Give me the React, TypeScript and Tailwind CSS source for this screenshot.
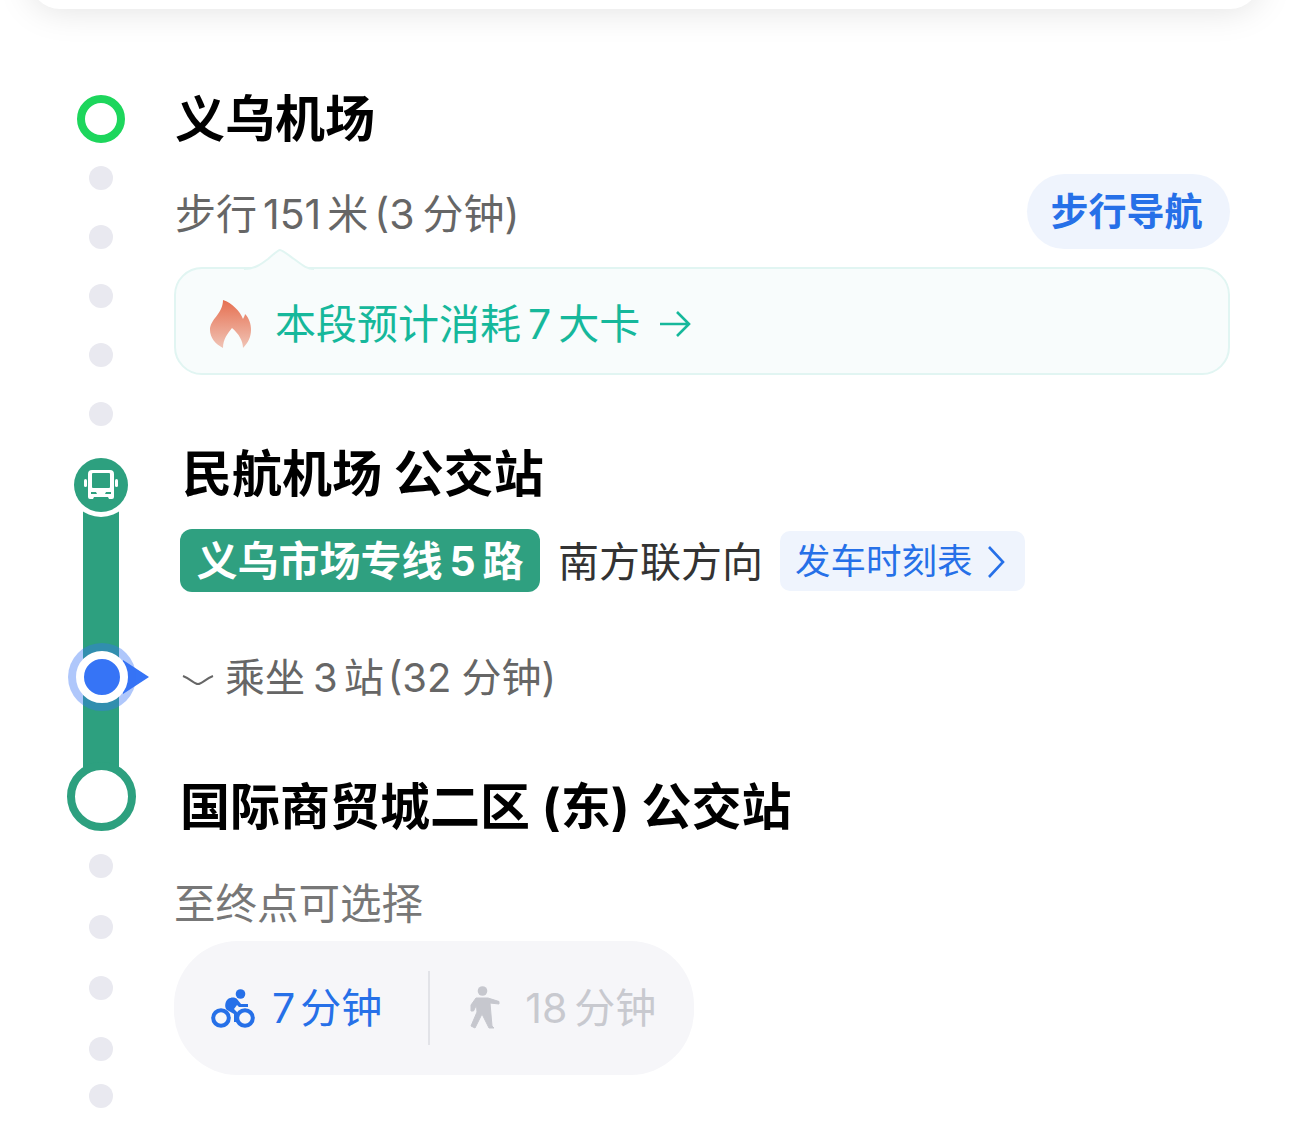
import React from "react";

const Dot = () => <div className="w-6 h-6 rounded-full bg-[#e9e9f0]" />;

const BusIcon = () => (
  <svg width="34" height="34" viewBox="0 0 34 34">
    <rect x="0" y="11" width="3" height="8" rx="1.5" fill="#fff" />
    <rect x="31" y="11" width="3" height="8" rx="1.5" fill="#fff" />
    <path
      fillRule="evenodd"
      d="M8 2h18a4 4 0 0 1 4 4v23a2 2 0 0 1-2 2h-3l-1-2H10l-1 2H6a2 2 0 0 1-2-2V6a4 4 0 0 1 4-4zM8 6v13a1 1 0 0 0 1 1h16a1 1 0 0 0 1-1V6a1 1 0 0 0-1-1H9a1 1 0 0 0-1 1zM7 24v2h6l-1-2zM27 24v2h-6l1-2z"
      fill="#fff"
    />
  </svg>
);

const FlameIcon = () => (
  <svg width="42" height="48" viewBox="0 0 42 48">
    <defs>
      <linearGradient id="flame" x1="0" y1="0" x2="0" y2="1">
        <stop offset="0" stopColor="#e66f50" />
        <stop offset="1" stopColor="#f0c4b6" />
      </linearGradient>
    </defs>
    <path
      d="M13 0c9 3 17 11 20 19 1-2 2-4 2-5 4 4 6 10 6 16 0 7-3 13-8 18 0-7-4-14-11-20-4 5-9 11-9 20C5 44 0 37 0 30 0 19 13 14 13 0z"
      fill="url(#flame)"
    />
  </svg>
);

const BikeIcon = () => (
  <svg width="44" height="40" viewBox="0 0 44 40" className="shrink-0">
    <circle cx="29.5" cy="6" r="4.8" fill="#2670e8" />
    <circle cx="10" cy="30" r="7.8" fill="none" stroke="#2670e8" strokeWidth="4" />
    <circle cx="34" cy="30" r="7.8" fill="none" stroke="#2670e8" strokeWidth="4" />
    <path
      d="M17 11c3-2 7-2 9 0l4 5h7v3h-9l-2-2-3 4 3 3v10h-3v-8l-7-4c-3-2-2-9 1-11z"
      fill="#2670e8"
    />
  </svg>
);

const WalkIcon = () => (
  <svg width="34" height="44" viewBox="0 0 34 44" className="shrink-0">
    <circle cx="14.5" cy="5" r="4.8" fill="#c6c7ce" />
    <path
      d="M8 12L20 12L31 15.5L31 18L22 17L24 40L26 42L21 42L14 28L7 42L3 40L9 26L8.5 19L5.5 25L3 25L3 19Z"
      fill="#c6c7ce"
      stroke="#c6c7ce"
      strokeWidth="1"
      strokeLinejoin="round"
    />
  </svg>
);

export default function App() {
  return (
    <div className="w-[1290px] h-[1127px] overflow-hidden bg-white font-['Inter','Noto_Sans_CJK_SC',sans-serif]">
      <div className="mx-[30px] h-[40px] -mt-[31px] rounded-b-[30px] bg-white shadow-[0_0_36px_rgba(0,0,0,0.13)]" />

      {/* walking leg */}
      <div className="flex mt-[86px] pl-[76px] pr-[60px]">
        <div className="w-[50px] mr-[49px] flex flex-col items-center shrink-0">
          <div className="w-12 h-12 rounded-full border-[8px] border-[#1dd65c]" />
          <div className="mt-[23px] flex flex-col gap-[35px]">
            <Dot />
            <Dot />
            <Dot />
            <Dot />
            <Dot />
          </div>
        </div>
        <div className="flex-1">
          <div className="h-[48px] text-[50px] leading-[48px] font-bold text-black">义乌机场</div>
          <div className="mt-[31px] h-[75px] flex items-center justify-between">
            <span className="mt-[4px] text-[41px] leading-[50px] text-[#666]">
              步行<span className="mx-[6px]">151</span>米<span className="ml-[6px]">(3</span>
              <span className="ml-[8px]">分钟)</span>
            </span>
            <button className="w-[203px] h-[75px] pr-[4px] rounded-full bg-[#eff4fd] text-[38px] font-bold text-[#2670e8]">
              步行导航
            </button>
          </div>
          <div className="relative mt-[18px] h-[108px] -ml-px rounded-[28px] border-2 border-[#e1f5f2] bg-[#f8fcfc] flex items-center pl-[34px] pt-[6px]">
            <svg width="70" height="22" viewBox="0 0 70 22" className="absolute left-[68px] -top-[20px]">
              <path
                d="M0 20c10 0 16-4 24-10 6-5 10-9 12-9s7 4 14 9c7 5 12 10 20 10v2H0z"
                fill="#f8fcfc"
              />
              <path
                d="M0 20c10 0 16-4 24-10 6-5 10-9 12-9s7 4 14 9c7 5 12 10 20 10"
                fill="none"
                stroke="#e1f5f2"
                strokeWidth="2"
              />
            </svg>
            <FlameIcon />
            <span className="ml-[23px] text-[41px] text-[#16b89b] leading-none">
              本段预计消耗<span className="mx-[7px]">7</span>大卡
            </span>
            <svg width="34" height="30" viewBox="0 0 34 30" className="ml-[18px]">
              <path d="M2 15h29M19 3l12 12-12 12" fill="none" stroke="#16b89b" strokeWidth="2.6" />
            </svg>
          </div>
        </div>
      </div>

      {/* bus leg */}
      <div className="flex mt-[32px] pl-[66px]">
        <div className="relative w-[70px] h-[373px] flex flex-col items-center shrink-0">
          <div className="relative z-10 w-[54px] h-[54px] rounded-full bg-[#2da07f] shadow-[0_0_0_5px_#fff] flex items-center justify-center">
            <BusIcon />
          </div>
          <div className="w-9 flex-1 -mt-[10px] -mb-[40px] bg-[#2da07f]" />
          <div className="relative z-10 w-[69px] h-[69px] rounded-full border-[8px] border-[#2da07f] bg-white" />
          {/* current position marker */}
          <div className="absolute z-20 left-[2px] top-[185px] w-[68px] h-[68px] rounded-full bg-[#3674f6]/40 flex items-center justify-center">
            <div className="w-[52px] h-[52px] rounded-full border-[8px] border-white bg-[#3674f6]" />
          </div>
          <svg width="26" height="34" viewBox="0 0 26 34" className="absolute z-10 left-[57px] top-[202px]">
            <path d="M0 0l26 17L0 34z" fill="#3674f6" />
          </svg>
        </div>
        <div className="ml-[47px]">
          <div className="h-[48px] ml-[-1px] mt-[-8px] text-[50px] leading-[48px] font-bold text-black whitespace-pre">
            民航机场 公交站
          </div>
          <div className="mt-[31px] ml-[-3px] flex items-center">
            <div className="w-[360px] h-[63px] pt-[2px] rounded-[12px] bg-[#2fa080] text-white text-[41px] font-bold flex items-center justify-center">
              义乌市场专线<span className="mx-[7px]">5</span>路
            </div>
            <span className="ml-[18px] mt-[2px] text-[41px] leading-[50px] text-[#333]">南方联方向</span>
            <div className="ml-[17px] w-[245px] h-[60px] pt-[3px] rounded-[10px] bg-[#eff4fd] flex items-center pl-[15px] text-[35.5px] text-[#2670e8]">
              发车时刻表
              <svg width="20" height="34" viewBox="0 0 20 34" className="ml-[13px]">
                <path d="M3 2l14 15L3 32" fill="none" stroke="#2670e8" strokeWidth="2.6" />
              </svg>
            </div>
          </div>
          <div className="mt-[61px] flex items-center">
            <svg width="32" height="14" viewBox="0 0 32 14" className="mt-[6px] -ml-px">
              <path d="M1 2c8 3 11 8 15 8s7-5 15-8" fill="none" stroke="#666" strokeWidth="2" />
            </svg>
            <span className="ml-[11px] text-[40px] leading-[50px] text-[#666]">
              乘坐<span className="ml-[8px] mr-[6px]">3</span>站<span className="ml-[4px]">(32</span>
              <span className="ml-[10px]">分钟)</span>
            </span>
          </div>
          <div className="mt-[80px] h-[48px] ml-[-3px] text-[50px] leading-[48px] font-bold text-black whitespace-pre">
            国际商贸城二区 (东) 公交站
          </div>
        </div>
      </div>

      {/* last walking / bike leg */}
      <div className="flex mt-[23px] pl-[76px]">
        <div className="w-[50px] mr-[48px] flex flex-col items-center shrink-0">
          <Dot />
          <div className="mt-[37px]"><Dot /></div>
          <div className="mt-[37px]"><Dot /></div>
          <div className="mt-[37px]"><Dot /></div>
          <div className="mt-[23px]"><Dot /></div>
        </div>
        <div>
          <div className="mt-[25px] text-[41.5px] leading-[50px] text-[#777]">至终点可选择</div>
          <div className="mt-[12px] w-[520px] h-[134px] rounded-[64px] bg-[#f6f6f9] flex items-center pl-[37px]">
            <BikeIcon />
            <span className="ml-[17px] mt-[2px] text-[41px] text-[#2670e8]">
              7<span className="ml-[5px]">分钟</span>
            </span>
            <div className="ml-[46px] w-[2px] h-[74px] bg-[#e2e3e8]" />
            <div className="ml-[38px]"><WalkIcon /></div>
            <span className="ml-[23px] mt-[2px] text-[41px] text-[#c8c9cf]">
              18<span className="ml-[7px]">分钟</span>
            </span>
          </div>
        </div>
      </div>
    </div>
  );
}
